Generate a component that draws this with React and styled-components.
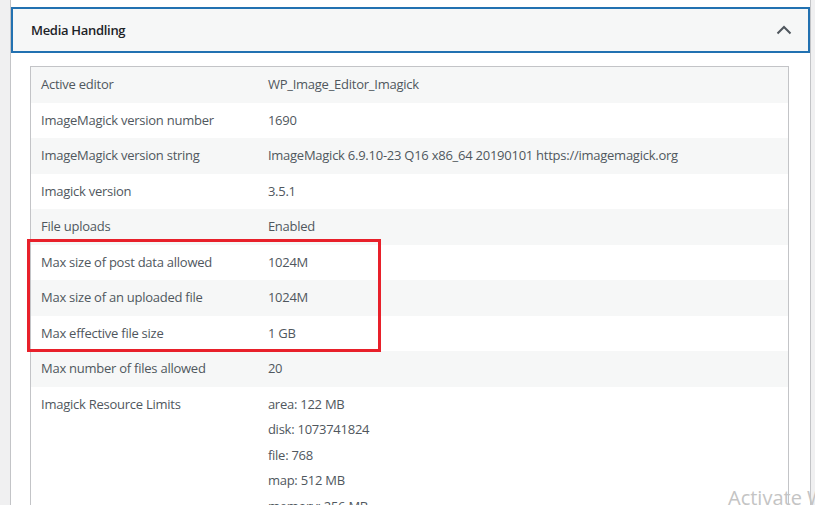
import styled, { createGlobalStyle } from "styled-components";

const GlobalStyle = createGlobalStyle`
  html, body {
    margin: 0;
    padding: 0;
    height: 100%;
    overflow: hidden;
    background: #f0f0f1;
    font-family: "Open Sans", "Noto Sans", sans-serif;
  }
`;

const Page = styled.div`
  padding-left: 10px;
  padding-right: 4px;
  position: relative;
  height: 505px;
  overflow: hidden;
`;

const Panel = styled.section`
  background: #fff;
  border-left: 1px solid #c3c4c7;
  border-right: 1px solid #c3c4c7;
  padding-top: 7px;
`;

const Trigger = styled.button`
  display: flex;
  align-items: center;
  justify-content: space-between;
  width: 100%;
  box-sizing: border-box;
  height: 46px;
  margin: 0;
  padding: 0 16px 0 18px;
  background: #f6f7f7;
  border: 2px solid #2271b1;
  font-family: inherit;
  font-size: 13px;
  font-weight: 600;
  letter-spacing: -0.3px;
  color: #1d2327;
  cursor: pointer;
`;

const Body = styled.div`
  padding: 13px 21px 0 19px;
`;

const Table = styled.table`
  width: 100%;
  border-collapse: collapse;
  border: 1px solid #c3c4c7;
`;

const Row = styled.tr`
  background: ${props => (props.$alt ? "#f6f7f7" : "#fff")};
`;

const Cell = styled.td`
  padding: 8px 10px;
  font-size: 13px;
  line-height: 19.5px;
  letter-spacing: -0.25px;
  color: #50575e;
  vertical-align: top;
  width: ${props => (props.$first ? "30%" : "auto")};
`;

const List = styled.ul`
  list-style: none;
  margin: 0;
  padding: 0;
  li {
    margin: 0 0 6px;
  }
`;

const Highlight = styled.div`
  position: absolute;
  left: 27px;
  top: 239px;
  width: 348px;
  height: 107px;
  border: 3px solid #e8202a;
  pointer-events: none;
`;

const Watermark = styled.div`
  position: absolute;
  left: 728px;
  top: 484px;
  font-family: "Open Sans", sans-serif;
  font-size: 20px;
  color: #c4c4c4;
  white-space: nowrap;
`;

const rows = [
  ["Active editor", "WP_Image_Editor_Imagick"],
  ["ImageMagick version number", "1690"],
  ["ImageMagick version string", "ImageMagick 6.9.10-23 Q16 x86_64 20190101 https://imagemagick.org"],
  ["Imagick version", "3.5.1"],
  ["File uploads", "Enabled"],
  ["Max size of post data allowed", "1024M"],
  ["Max size of an uploaded file", "1024M"],
  ["Max effective file size", "1 GB"],
  ["Max number of files allowed", "20"],
];

const limits = [
  "area: 122 MB",
  "disk: 1073741824",
  "file: 768",
  "map: 512 MB",
  "memory: 256 MB",
  "thread: 1",
];

function Chevron() {
  return (
    <svg width="16" height="10" viewBox="0 0 16 10" fill="none">
      <path d="M1.5 8.5 L8 2 L14.5 8.5" stroke="#50575e" strokeWidth="2" />
    </svg>
  );
}

export default function App() {
  return (
    <>
      <GlobalStyle />
      <Page>
        <Panel>
          <Trigger>
            <span>Media Handling</span>
            <Chevron />
          </Trigger>
          <Body>
            <Table>
              <tbody>
                {rows.map(([label, value], i) => (
                  <Row key={label} $alt={i % 2 === 0}>
                    <Cell $first>{label}</Cell>
                    <Cell>{value}</Cell>
                  </Row>
                ))}
                <Row>
                  <Cell $first>Imagick Resource Limits</Cell>
                  <Cell>
                    <List>
                      {limits.map(item => <li key={item}>{item}</li>)}
                    </List>
                  </Cell>
                </Row>
              </tbody>
            </Table>
          </Body>
        </Panel>
        <Watermark>Activate Windows</Watermark>
        <Highlight />
      </Page>
    </>
  );
}
